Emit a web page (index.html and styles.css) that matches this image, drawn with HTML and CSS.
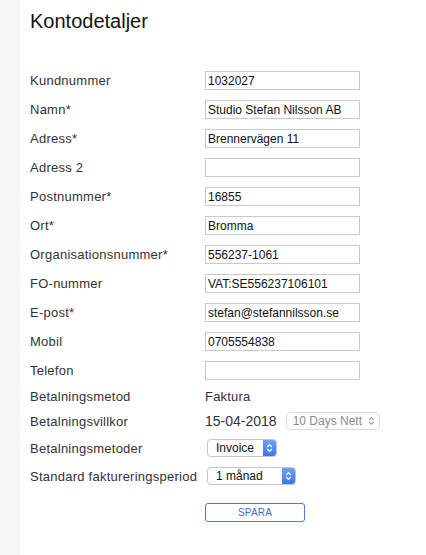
FILE: index.html
```html
<!DOCTYPE html>
<html lang="sv">
<head>
<meta charset="utf-8">
<title>Kontodetaljer</title>
<link rel="stylesheet" href="styles.css">
</head>
<body>
<div class="layout">
  <aside class="sidebar"></aside>
  <main class="main">
    <h1 class="title">Kontodetaljer</h1>
    <form class="form">
      <div class="group fields">
        <div class="row"><label class="label">Kundnummer</label><input class="input" value="1032027"></div>
        <div class="row"><label class="label">Namn*</label><input class="input" value="Studio Stefan Nilsson AB"></div>
        <div class="row"><label class="label">Adress*</label><input class="input" value="Brennervägen 11"></div>
        <div class="row"><label class="label">Adress 2</label><input class="input" value=""></div>
        <div class="row"><label class="label">Postnummer*</label><input class="input" value="16855"></div>
        <div class="row"><label class="label">Ort*</label><input class="input" value="Bromma"></div>
        <div class="row"><label class="label">Organisationsnummer*</label><input class="input" value="556237-1061"></div>
        <div class="row"><label class="label">FO-nummer</label><input class="input" value="VAT:SE556237106101"></div>
        <div class="row"><label class="label">E-post*</label><input class="input" value="stefan@stefannilsson.se"></div>
        <div class="row"><label class="label">Mobil</label><input class="input" value="0705554838"></div>
        <div class="row"><label class="label">Telefon</label><input class="input" value=""></div>
      </div>
      <div class="group extras">
        <div class="row row-s"><span class="label">Betalningsmetod</span><span class="value">Faktura</span></div>
        <div class="row row-s row-villkor"><span class="label">Betalningsvillkor</span><span class="value date">15-04-2018</span>
          <span class="select select-disabled w-nett"><span class="select-text">10 Days Nett</span><span class="arrow arrow-gray"><svg width="7" height="10" viewBox="0 0 7 10"><path d="M1.2 4 L3.5 1.7 L5.8 4 M1.2 6 L3.5 8.3 L5.8 6" fill="none" stroke="#9a9a9a" stroke-width="1.1"/></svg></span></span>
        </div>
        <div class="row row-s row-metoder"><span class="label">Betalningsmetoder</span>
          <span class="select w-invoice"><span class="select-text">Invoice</span><span class="arrow"><svg width="7" height="10" viewBox="0 0 7 10"><path d="M1.2 4 L3.5 1.7 L5.8 4 M1.2 6 L3.5 8.3 L5.8 6" fill="none" stroke="#fff" stroke-width="1.2"/></svg></span></span>
        </div>
        <div class="row row-s row-period"><span class="label">Standard faktureringsperiod</span>
          <span class="select w-period"><span class="select-text">1 månad</span><span class="arrow"><svg width="7" height="10" viewBox="0 0 7 10"><path d="M1.2 4 L3.5 1.7 L5.8 4 M1.2 6 L3.5 8.3 L5.8 6" fill="none" stroke="#fff" stroke-width="1.2"/></svg></span></span>
        </div>
        <div class="row row-s row-button"><span class="label"></span><button type="button" class="btn">SPARA</button></div>
      </div>
    </form>
  </main>
</div>
</body>
</html>
```
FILE: styles.css
```css
* { box-sizing: border-box; }
html, body { margin: 0; padding: 0; background: #fff; }
body { font-family: "Liberation Sans", Arial, sans-serif; color: #333; }
.layout { display: flex; min-height: 555px; }
.sidebar { width: 20px; flex: none; background: #f6f6f6; }
.main { flex: 1; padding-left: 10px; }
.title { margin: 9px 0 0; font-size: 20px; line-height: 24px; font-weight: normal; color: #111; }
.form { margin-top: 38px; }
.group { display: flex; flex-direction: column; }
.fields { gap: 10px; }
.extras { margin-top: 7px; }
.row { display: flex; align-items: center; height: 19px; }
.row-s { height: 18px; }
.row-villkor { margin-top: 7px; }
.row-metoder { margin-top: 9px; }
.row-period { margin-top: 10px; }
.row-button { margin-top: 18px; height: 19px; }
.label { width: 175px; flex: none; font-size: 13px; letter-spacing: 0.25px; color: #333; white-space: nowrap; }
.input { width: 155px; height: 19px; border: 1px solid #c9c9c9; padding: 0 2px; font-family: "Liberation Sans", Arial, sans-serif; font-size: 12px; color: #111; background: #fff; outline: none; border-radius: 0; }
.value { font-size: 13px; letter-spacing: 0.2px; color: #333; }
.date { font-size: 14px; letter-spacing: 0; margin-right: 9px; }
.select { display: flex; align-items: stretch; height: 18px; border: 1px solid #c6c6c6; border-radius: 4px; background: #fff; overflow: hidden; font-size: 12px; color: #111; }
.row-metoder .select, .row-period .select { margin-left: 2px; }
.select-text { flex: 1; display: flex; align-items: center; padding-left: 8px; white-space: nowrap; }
.arrow { width: 13px; flex: none; display: flex; align-items: center; justify-content: center; background: linear-gradient(#6ea2f7, #3a76ea); }
.arrow-gray { background: none; width: 14px; }
.select-disabled { border-color: #dcdcdc; color: #8a8a8a; }
.select-disabled .select-text { padding-left: 6px; }
.w-nett { width: 94px; }
.w-invoice { width: 70px; }
.w-period { width: 89px; }
.btn { width: 100px; height: 19px; padding: 0; border: 1px solid #4a80d2; border-radius: 3px; background: #fff; color: #3d6fc4; font-family: "Liberation Sans", Arial, sans-serif; font-size: 10px; letter-spacing: 0.2px; }
```
